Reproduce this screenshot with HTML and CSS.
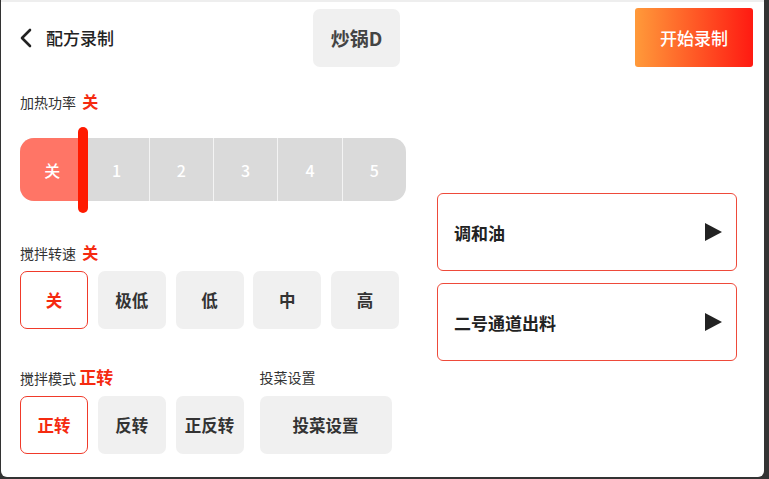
FILE: index.html
```html
<!DOCTYPE html>
<html lang="zh-CN">
<head>
    <meta charset="UTF-8">
    <meta name="viewport" content="width=device-width, initial-scale=1.0">
    <title>配方录制</title>
    <link rel="stylesheet" href="styles.css">
</head>
<body>
    <div class="screen">
        <header>
            <div class="title-group">
                <svg class="back" width="14" height="20" viewBox="0 0 14 20">
                    <polyline points="10,2 2,10 10,18" fill="none" stroke="#222" stroke-width="2.6" stroke-linecap="round" stroke-linejoin="round"/>
                </svg>
                <span class="title">配方录制</span>
            </div>
            <div class="pot-button">炒锅D</div>
            <button class="start-button">开始录制</button>
        </header>

        <div class="main">
            <div class="left-col">
                <div class="label-row heat-label">加热功率 <span class="value">关</span></div>
                <div class="slider">
                    <div class="slider-bar">
                        <div class="seg seg-off">关</div>
                        <div class="seg">1</div>
                        <div class="seg">2</div>
                        <div class="seg">3</div>
                        <div class="seg">4</div>
                        <div class="seg">5</div>
                    </div>
                    <div class="thumb"></div>
                </div>

                <div class="label-row speed-label">搅拌转速 <span class="value">关</span></div>
                <div class="btn-row">
                    <button class="opt active">关</button>
                    <button class="opt">极低</button>
                    <button class="opt">低</button>
                    <button class="opt">中</button>
                    <button class="opt">高</button>
                </div>

                <div class="mode-section">
                    <div class="group">
                        <div class="label-row">搅拌模式 <span class="value big">正转</span></div>
                        <div class="btn-row">
                            <button class="opt active">正转</button>
                            <button class="opt">反转</button>
                            <button class="opt">正反转</button>
                        </div>
                    </div>
                    <div class="group">
                        <div class="label-row">投菜设置</div>
                        <div class="btn-row">
                            <button class="opt wide">投菜设置</button>
                        </div>
                    </div>
                </div>
            </div>

            <div class="right-col">
                <div class="card">
                    <span>调和油</span>
                    <svg width="17" height="18" viewBox="0 0 17 18"><polygon points="0,0 17,9 0,18" fill="#222"/></svg>
                </div>
                <div class="card">
                    <span>二号通道出料</span>
                    <svg width="17" height="18" viewBox="0 0 17 18"><polygon points="0,0 17,9 0,18" fill="#222"/></svg>
                </div>
            </div>
        </div>
    </div>
</body>
</html>
```

FILE: styles.css
```css
body {
    margin: 0;
    padding: 0;
    background-color: #333333;
    font-family: "Noto Sans CJK SC", "Noto Sans", sans-serif;
    color: #333333;
}

.screen {
    width: 763px;
    height: 475px;
    margin-left: 1px;
    background-color: #ffffff;
    border-top: 2px solid #eeeeee;
    border-radius: 0 0 6px 6px;
    overflow: hidden;
}

header {
    display: flex;
    align-items: center;
    height: 59px;
    padding: 6px 11px 0 19px;
}

.title-group {
    display: flex;
    align-items: center;
    width: 293px;
}

.back {
    margin-right: 12px;
}

.title {
    font-size: 17px;
    font-weight: 500;
    color: #222222;
}

.pot-button {
    width: 87px;
    height: 58px;
    line-height: 58px;
    text-align: center;
    background-color: #f0f0f0;
    border-radius: 7px;
    font-size: 19px;
    font-weight: bold;
    color: #444444;
}

.start-button {
    margin-left: auto;
    width: 118px;
    height: 59px;
    border: none;
    border-radius: 3px;
    background: linear-gradient(to right, #ff9a3a, #ff1a12);
    color: #ffffff;
    font-family: inherit;
    font-size: 17px;
    font-weight: 500;
}

.main {
    display: flex;
}

.left-col {
    width: 386px;
    padding-left: 19px;
}

.label-row {
    height: 22px;
    line-height: 22px;
    font-size: 14px;
    color: #333333;
}

.label-row .value {
    margin-left: 3px;
    font-size: 16px;
    font-weight: bold;
    color: #f52a10;
}

.label-row .value.big {
    margin-left: 0;
    font-size: 17px;
}

.heat-label {
    margin-top: 23px;
}

.slider {
    position: relative;
    height: 75px;
    margin-top: 15px;
    padding-top: 11px;
}

.slider-bar {
    display: grid;
    grid-template-columns: repeat(6, 1fr);
    height: 63px;
    border-radius: 14px;
    overflow: hidden;
    background-color: #dadada;
}

.seg {
    display: flex;
    align-items: center;
    justify-content: center;
    font-size: 16px;
    font-weight: 500;
    color: #ffffff;
    border-left: 1px solid #f4f4f4;
}

.seg:nth-child(2) {
    border-left: none;
}

.seg-off {
    background-color: #ff7566;
    border-left: none;
}

.thumb {
    position: absolute;
    left: 58px;
    top: 0;
    width: 10px;
    height: 86px;
    border-radius: 5px;
    background-color: #ff1a00;
}

.speed-label {
    margin-top: 28px;
}

.btn-row {
    display: flex;
    gap: 9.75px;
    margin-top: 8px;
}

.opt {
    width: 68px;
    height: 58px;
    border: none;
    border-radius: 7px;
    background-color: #f0f0f0;
    font-family: inherit;
    font-size: 16.5px;
    font-weight: bold;
    color: #333333;
    padding: 0;
}

.opt.active {
    background-color: #ffffff;
    border: 1.5px solid #f03a2a;
    color: #f52a10;
}

.opt.wide {
    width: 132px;
}

.mode-section {
    display: flex;
    gap: 16px;
    margin-top: 37px;
}

.right-col {
    width: 300px;
    margin-left: 31px;
    padding-top: 126px;
}

.card {
    display: flex;
    align-items: center;
    justify-content: space-between;
    height: 76px;
    padding: 0 14px 0 16px;
    margin-bottom: 12px;
    border: 1.5px solid #ee4a3a;
    border-radius: 6px;
    font-size: 17px;
    font-weight: bold;
    color: #222222;
}
```
